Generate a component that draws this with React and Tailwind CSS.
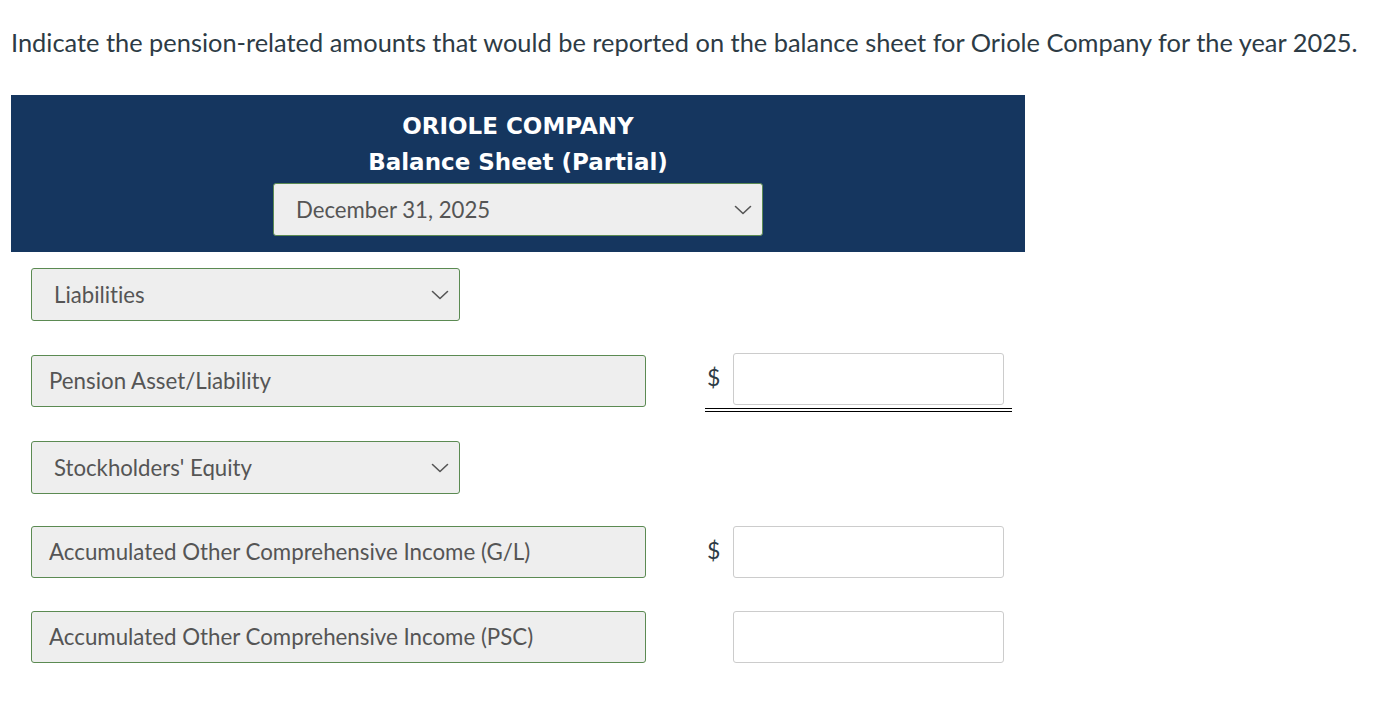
import React from "react";

const Chevron = () => (
  <svg width="18" height="10" viewBox="0 0 18 10" fill="none" className="shrink-0">
    <path d="M1.5 1.5 L9 8.5 L16.5 1.5" stroke="#555555" strokeWidth="1.6" strokeLinecap="round" strokeLinejoin="round" />
  </svg>
);

const SelectBox = ({ label, width }) => (
  <div
    className="flex items-center justify-between h-full bg-[#eeeeee] border border-[#5b8a52] rounded-[3px] pl-[22px] pr-[10px] text-[22.2px] text-[#555555]"
    style={{ width }}
  >
    <span>{label}</span>
    <Chevron />
  </div>
);

const TextBox = ({ label }) => (
  <div className="flex items-center w-[615px] h-[52px] bg-[#eeeeee] border border-[#5b8a52] rounded-[3px] pl-[17px] pb-[1px] text-[22.3px] text-[#555555]">
    {label}
  </div>
);

const Amount = ({ dollar = true, underline = false }) => (
  <div className="flex flex-col w-[307px] ml-[59px]">
    <div className="flex items-center h-[52px]">
      <span className="w-[28px] pl-[2px] pb-[3px] text-[23px] text-[#2d3b45]">{dollar ? "$" : ""}</span>
      <div className="w-[271px] h-[52px] bg-white border border-[#cccccc] rounded-[3px]" />
    </div>
    {underline && <div className="mt-[3px] h-[4px] border-y border-black" />}
  </div>
);

export default function App() {
  return (
    <div
      className="w-[1390px] h-[716px] bg-white pl-[11px] pt-[26px] [font-variant-ligatures:none]"
      style={{ fontFamily: "Lato, 'Noto Sans', sans-serif" }}
    >
      <p className="text-[25.4px] leading-[32px] text-[#2d3b45] whitespace-nowrap">
        Indicate the pension-related amounts that would be reported on the balance sheet for Oriole Company for the year 2025.
      </p>
      <div className="mt-[37px] w-[1014px] h-[157px] bg-[#15365f] flex flex-col items-center pt-[13px]">
        <div className="text-white font-bold text-[23px] leading-[36px]" style={{ fontFamily: "'DejaVu Sans', Verdana, sans-serif" }}>
          <div className="text-center">ORIOLE COMPANY</div>
          <div className="text-center">Balance Sheet (Partial)</div>
        </div>
        <div className="mt-[3px] h-[53px]">
          <SelectBox label="December 31, 2025" width={490} />
        </div>
      </div>
      <div className="pl-[20px]">
        <div className="mt-[16px] h-[53px]">
          <SelectBox label="Liabilities" width={429} />
        </div>
        <div className="mt-[32px] h-[60px] flex items-start">
          <div className="mt-[2px]"><TextBox label="Pension Asset/Liability" /></div>
          <Amount underline />
        </div>
        <div className="mt-[28px] h-[53px]">
          <SelectBox label="Stockholders' Equity" width={429} />
        </div>
        <div className="mt-[32px] h-[53px] flex items-start">
          <TextBox label="Accumulated Other Comprehensive Income (G/L)" />
          <Amount />
        </div>
        <div className="mt-[32px] h-[53px] flex items-start">
          <TextBox label="Accumulated Other Comprehensive Income (PSC)" />
          <Amount dollar={false} />
        </div>
      </div>
    </div>
  );
}
